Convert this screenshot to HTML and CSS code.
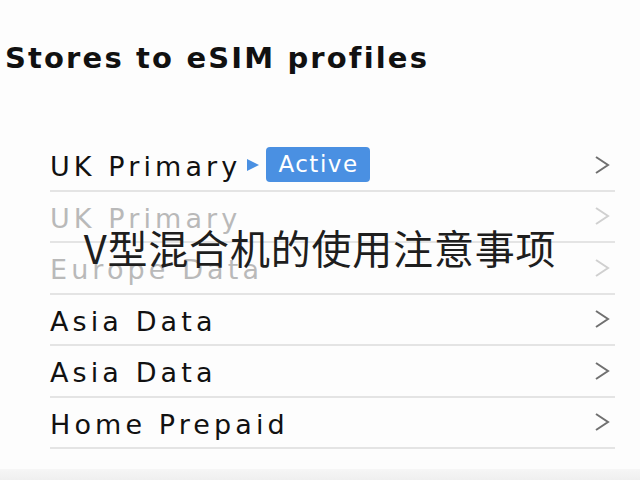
FILE: index.html
```html
<!DOCTYPE html>
<html lang="zh-CN">
<head>
    <meta charset="UTF-8">
    <meta name="viewport" content="width=device-width, initial-scale=1.0">
    <title>Stores to eSIM profiles</title>
    <link rel="stylesheet" href="styles.css">
</head>
<body>

<div class="screen">
    <h1 class="title">Stores to eSIM profiles</h1>

    <ul class="profile-list">
        <li class="profile-row">
            <span class="profile-name">UK Primary</span>
            <span class="marker"></span>
            <span class="badge">Active</span>
            <svg class="chevron" viewBox="0 0 16 20"><polyline points="2,2 14,10 2,18"/></svg>
        </li>
        <li class="profile-row disabled">
            <span class="profile-name">UK Primary</span>
            <svg class="chevron" viewBox="0 0 16 20"><polyline points="2,2 14,10 2,18"/></svg>
        </li>
        <li class="profile-row disabled">
            <span class="profile-name">Europe Data</span>
            <svg class="chevron" viewBox="0 0 16 20"><polyline points="2,2 14,10 2,18"/></svg>
        </li>
        <li class="profile-row">
            <span class="profile-name">Asia Data</span>
            <svg class="chevron" viewBox="0 0 16 20"><polyline points="2,2 14,10 2,18"/></svg>
        </li>
        <li class="profile-row">
            <span class="profile-name">Asia Data</span>
            <svg class="chevron" viewBox="0 0 16 20"><polyline points="2,2 14,10 2,18"/></svg>
        </li>
        <li class="profile-row">
            <span class="profile-name">Home Prepaid</span>
            <svg class="chevron" viewBox="0 0 16 20"><polyline points="2,2 14,10 2,18"/></svg>
        </li>
    </ul>

    <div class="caption">V型混合机的使用注意事项</div>
    <div class="bottom-bar"></div>
</div>

</body>
</html>
```

FILE: styles.css
```css
:root {
    --text-color: #111111;
    --muted-color: #b9b9b9;
    --line-color: #e4e4e4;
    --accent: #4a90e2;
    --chevron: #707070;
}

* {
    box-sizing: border-box;
    margin: 0;
    padding: 0;
}

body {
    background: #fdfdfd;
    font-family: 'DejaVu Sans', sans-serif;
    color: var(--text-color);
}

.screen {
    position: relative;
    width: 640px;
    height: 480px;
    overflow: hidden;
    padding-top: 40px;
}

.title {
    font-family: 'DejaVu Sans', sans-serif;
    font-weight: bold;
    font-size: 29px;
    letter-spacing: 2.15px;
    line-height: 36px;
    padding-left: 5px;
}

.profile-list {
    list-style: none;
    margin: 64px 25px 0 50px;
}

.profile-row {
    display: flex;
    align-items: center;
    height: 51.5px;
    padding-top: 4px;
    border-bottom: 2px solid var(--line-color);
}

.profile-name {
    font-size: 27px;
    letter-spacing: 4.1px;
    color: var(--text-color);
}

.disabled .profile-name {
    color: var(--muted-color);
}

.marker {
    width: 0;
    height: 0;
    margin: -3px 7px 0 6px;
    border-top: 6.5px solid transparent;
    border-bottom: 6.5px solid transparent;
    border-left: 12px solid var(--accent);
}

.badge {
    background: var(--accent);
    color: #ffffff;
    font-size: 23px;
    letter-spacing: 1.5px;
    line-height: 29px;
    padding: 3px 11px 3px 12px;
    margin-top: -4px;
    border-radius: 4px;
}

.chevron {
    width: 16px;
    height: 20px;
    margin: -4px 5px 0 auto;
    fill: none;
    stroke: var(--chevron);
    stroke-width: 2;
}

.disabled .chevron {
    stroke: #d0d0d0;
}

/* caption laid over the list */
.caption {
    position: absolute;
    left: 0;
    right: 0;
    top: 222px;
    text-align: center;
    font-family: 'Noto Sans CJK SC', sans-serif;
    font-size: 40px;
    letter-spacing: 0.8px;
    line-height: 50px;
    color: #1e1e1e;
}

.bottom-bar {
    position: absolute;
    left: 0;
    right: 0;
    bottom: 0;
    height: 11px;
    background: linear-gradient(#f6f6f6, #efefef);
}
```
